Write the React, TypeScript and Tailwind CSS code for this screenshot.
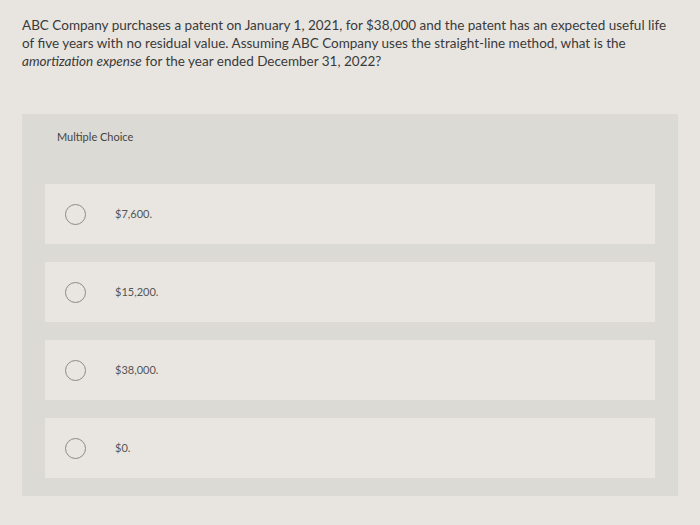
const options = ["$7,600.", "$15,200.", "$38,000.", "$0."];

export default function App() {
  return (
    <div className="w-[700px] h-[525px] overflow-hidden bg-[#e8e5e0] font-['Lato',sans-serif]">
      <div className="pl-[22px] pr-[20px] pt-[16px] text-[13.5px] leading-[18px] text-[#3a3a3a]">
        ABC Company purchases a patent on January 1, 2021, for $38,000 and the patent has an expected useful life
        of five years with no residual value. Assuming ABC Company uses the straight-line method, what is the{" "}
        <i>amortization expense</i> for the year ended December 31, 2022?
      </div>

      <div className="mx-[22px] mt-[44px] bg-[#dcdad5] pb-[18px]">
        <div className="h-[70px] pl-[35px] pt-[15px] text-[11px] text-[#444]">Multiple Choice</div>
        <div className="flex flex-col gap-[18px] px-[23px]">
          {options.map((o) => (
            <div key={o} className="h-[60px] bg-[#e9e6e1] flex items-center">
              <span className="ml-[20px] w-[21px] h-[21px] rounded-full border-[1.5px] border-[#8a8a8a]" />
              <span className="ml-[29px] text-[11px] text-[#555]">{o}</span>
            </div>
          ))}
        </div>
      </div>
    </div>
  );
}
